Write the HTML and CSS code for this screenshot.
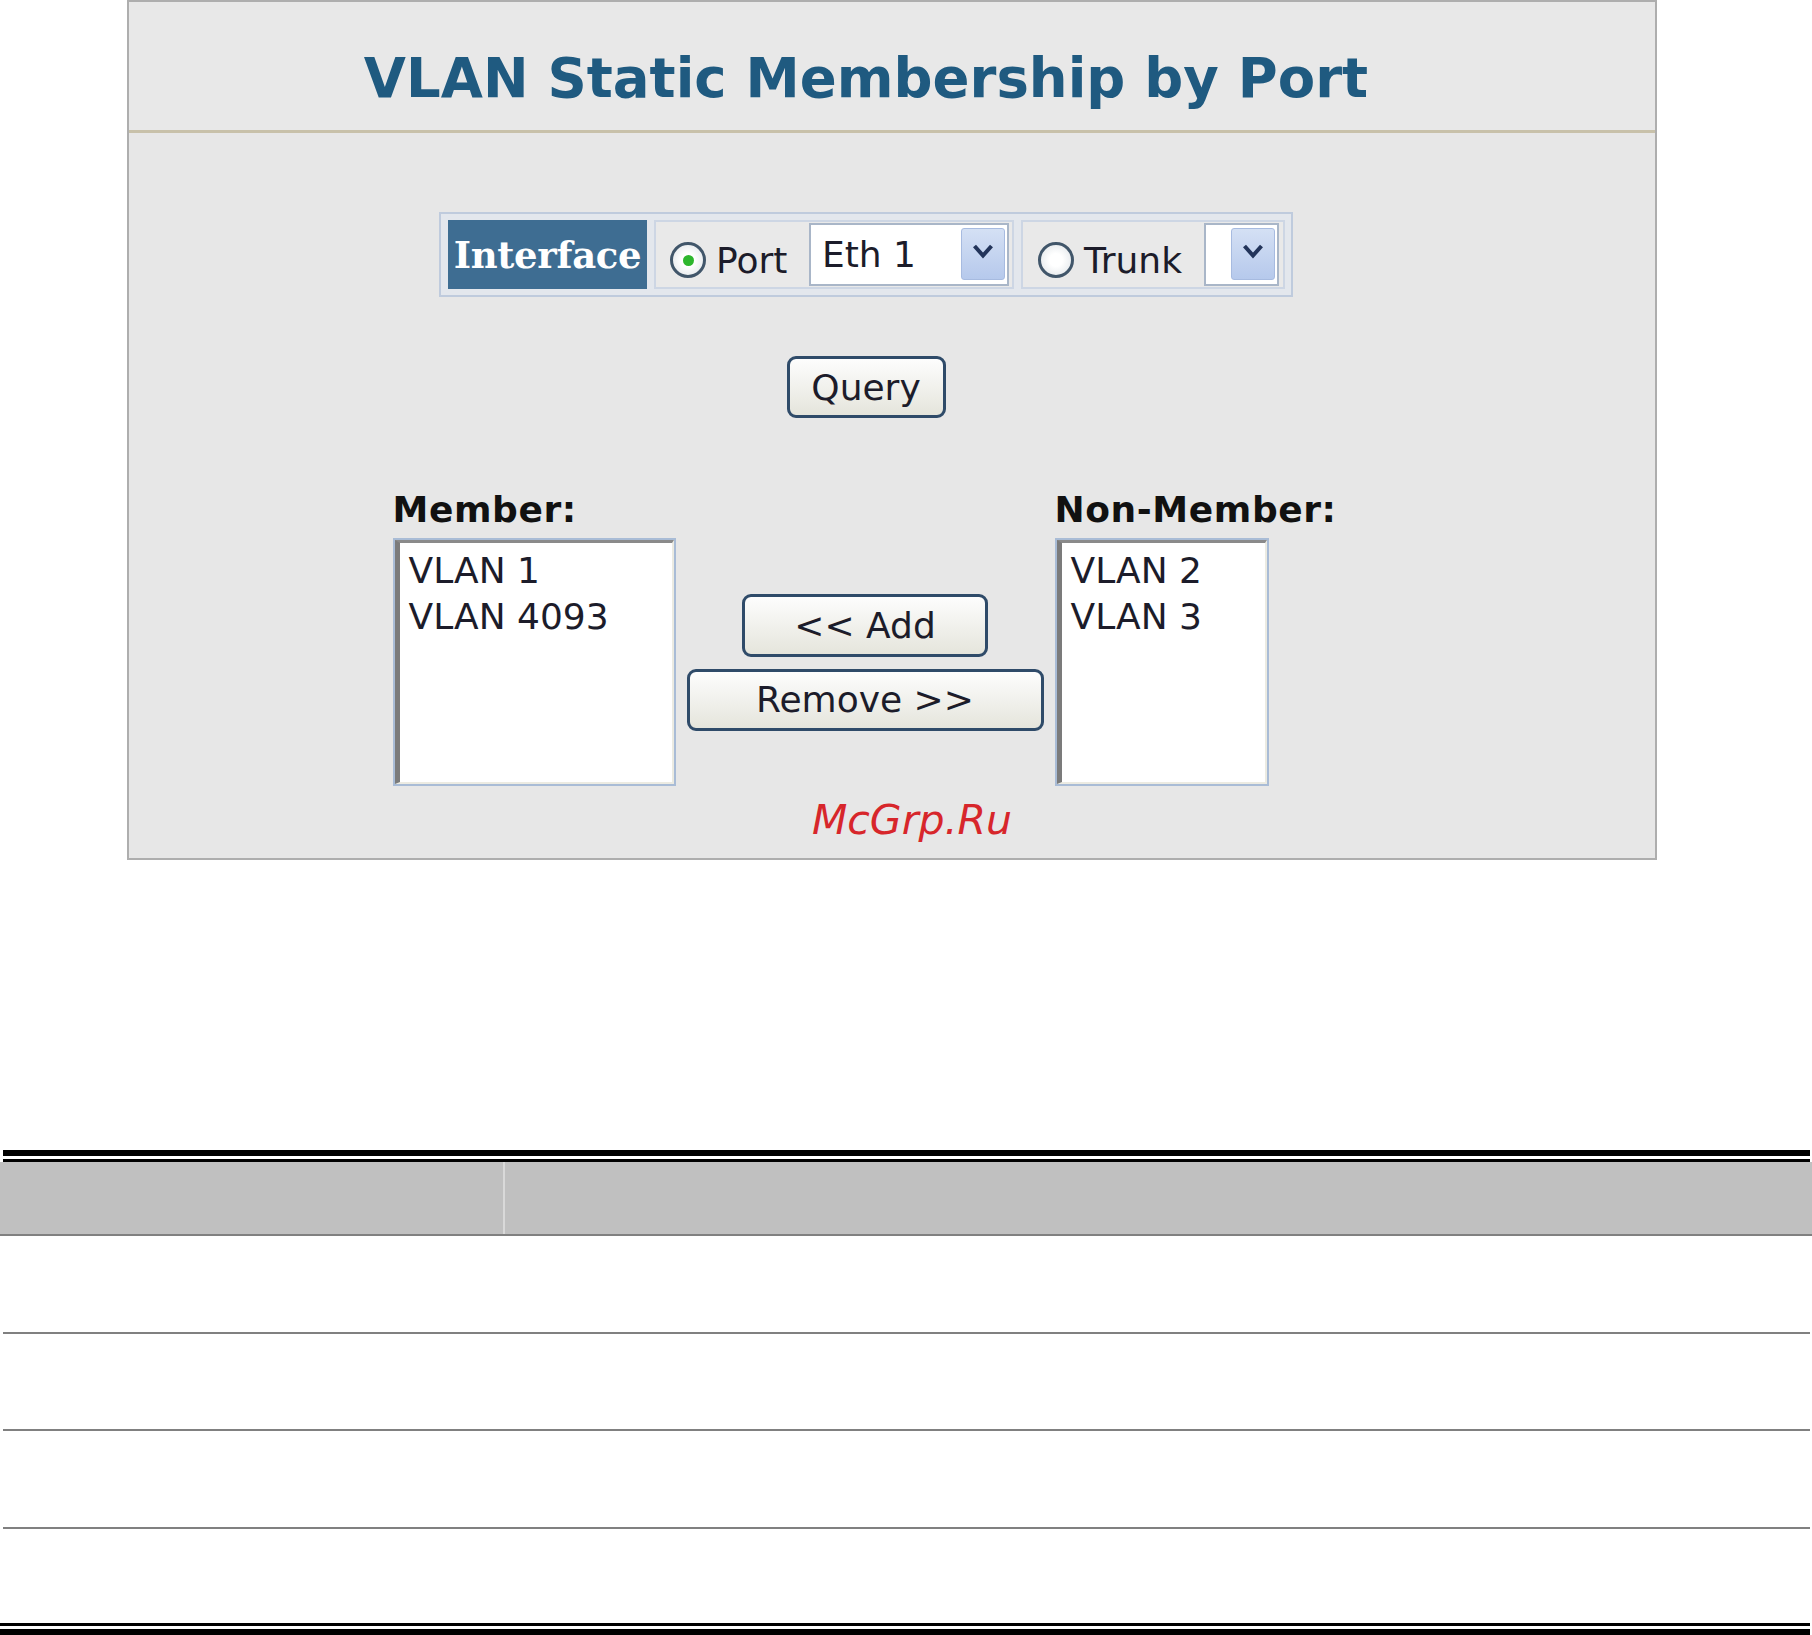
FILE: index.html
```html
<!DOCTYPE html>
<html lang="en">
<head>
    <meta charset="UTF-8">
    <meta name="viewport" content="width=device-width, initial-scale=1.0">
    <title>VLAN Static Membership by Port</title>
    <link rel="stylesheet" href="styles.css">
</head>
<body>
    <div class="panel">
        <div class="panel-head">
            <h1>VLAN Static Membership by Port</h1>
        </div>

        <div class="panel-body">
            <!-- interface selector -->
            <div class="iface">
                <div class="iface-label">Interface</div>
                <div class="iface-cell port-cell">
                    <span class="radio checked"></span>
                    <span class="opt">Port</span>
                    <div class="select port-select">
                        <span class="select-text">Eth 1</span>
                        <span class="drop">
                            <svg width="42" height="50" viewBox="0 0 42 50"><path d="M12.5 17 L21 26.5 L29.5 17" fill="none" stroke="#22345a" stroke-width="4"/></svg>
                        </span>
                    </div>
                </div>
                <div class="iface-cell trunk-cell">
                    <span class="radio"></span>
                    <span class="opt">Trunk</span>
                    <div class="select trunk-select">
                        <span class="select-text"></span>
                        <span class="drop">
                            <svg width="42" height="50" viewBox="0 0 42 50"><path d="M12.5 17 L21 26.5 L29.5 17" fill="none" stroke="#22345a" stroke-width="4"/></svg>
                        </span>
                    </div>
                </div>
            </div>

            <button class="btn query-btn">Query</button>

            <!-- member lists -->
            <div class="members">
                <div class="list-label">Member:</div>
                <div></div>
                <div class="list-label">Non-Member:</div>

                <div class="listbox member-list">
                    <div class="listbox-inner">
                        <div class="item">VLAN 1</div>
                        <div class="item">VLAN 4093</div>
                    </div>
                </div>
                <div class="move-buttons">
                    <button class="btn add-btn">&lt;&lt; Add</button>
                    <button class="btn remove-btn">Remove &gt;&gt;</button>
                </div>
                <div class="listbox nonmember-list">
                    <div class="listbox-inner">
                        <div class="item">VLAN 2</div>
                        <div class="item">VLAN 3</div>
                    </div>
                </div>
            </div>

            <div class="watermark">McGrp.Ru</div>
        </div>
    </div>

    <div class="param-table">
        <div class="rule-top"></div>
        <div class="thead">
            <div class="th th-first"></div>
            <div class="th"></div>
        </div>
        <div class="trow row-a"></div>
        <div class="trow row-b"></div>
        <div class="trow row-a"></div>
        <div class="trow row-last"></div>
        <div class="rule-bottom"></div>
    </div>
</body>
</html>
```

FILE: styles.css
```css
body {
    margin: 0;
    background: #fff;
    font-family: "DejaVu Sans", Verdana, sans-serif;
    color: #1c1c2a;
}

.panel {
    margin-left: 127px;
    width: 1530px;
    height: 860px;
    box-sizing: border-box;
    border: 2px solid #aeaeae;
    background: #e7e7e7;
}

.panel-head {
    padding: 44px 52px 20px 0;
    border-bottom: 3px solid #c8c1aa;
    background: #e8e8e8;
}
.panel-head h1 {
    margin: 0;
    text-align: center;
    font-size: 54.5px;
    line-height: 64px;
    font-weight: bold;
    color: #1f5a80;
}

.panel-body {
    padding: 79px 52px 0 0;
}

/* interface bar */
.iface {
    display: flex;
    width: fit-content;
    margin: 0 auto;
    gap: 7px;
    padding: 6px 6px 6px 7px;
    border: 2px solid #bfcbdd;
    background: #e3e7ed;
}
.iface-label {
    width: 199px;
    height: 69px;
    box-sizing: border-box;
    display: flex;
    align-items: center;
    justify-content: center;
    background: #3e6d92;
    color: #fff;
    font-family: "DejaVu Serif", "Liberation Serif", serif;
    font-weight: bold;
    font-size: 37px;
    letter-spacing: -0.3px;
}
.iface-cell {
    height: 69px;
    box-sizing: border-box;
    display: flex;
    align-items: center;
    gap: 10px;
    border: 2px solid #cdd6e4;
    background: #e9e9e9;
}
.port-cell {
    width: 360px;
    padding: 0 3px 0 14px;
}
.trunk-cell {
    width: 264px;
    padding: 0 4px 0 15px;
}
.opt {
    font-size: 36px;
    margin-top: 12px;
}
.radio {
    width: 36px;
    height: 36px;
    margin-top: 11px;
    box-sizing: border-box;
    border-radius: 50%;
    border: 3px solid #41566a;
    background: radial-gradient(circle, #ffffff 30%, #dde2e6);
    display: flex;
    align-items: center;
    justify-content: center;
    flex-shrink: 0;
}
.radio.checked::after {
    content: "";
    width: 11px;
    height: 11px;
    border-radius: 50%;
    background: #2db62d;
}

.select {
    height: 63px;
    box-sizing: border-box;
    margin-left: auto;
    display: flex;
    align-items: center;
    padding: 3px 2px 4px 11px;
    border: 2px solid #a9b6c8;
    background: #fff;
    font-size: 36px;
}
.port-select {
    width: 200px;
}
.trunk-select {
    width: 75px;
    padding-left: 2px;
}
.select-text {
    flex: 1;
}
.drop {
    width: 44px;
    height: 52px;
    box-sizing: border-box;
    border: 1px solid #a7bbe0;
    border-radius: 3px;
    background: linear-gradient(#d4e0f4, #b6c9ec);
    display: flex;
    align-items: center;
    justify-content: center;
}

/* buttons */
.btn {
    box-sizing: border-box;
    border: 3px solid #2f4b69;
    border-radius: 9px;
    background: linear-gradient(#fdfdfd, #e5e5dc);
    font-family: "DejaVu Sans", Verdana, sans-serif;
    font-size: 36px;
    color: #1c1c2a;
    padding: 0;
}
.query-btn {
    display: block;
    width: 159px;
    height: 62px;
    margin: 59px auto 0;
}

/* member / non-member */
.members {
    display: grid;
    grid-template-columns: 283px 357px 285px;
    column-gap: 11px;
    width: fit-content;
    margin: 70px auto 0;
}
.list-label {
    font-weight: bold;
    font-size: 36px;
    line-height: 44px;
    letter-spacing: 0.6px;
    color: #111;
    white-space: nowrap;
}
.listbox {
    height: 248px;
    margin-top: 6px;
    box-sizing: border-box;
    border: 2px solid #a9bcd6;
}
.nonmember-list {
    width: 214px;
}
.listbox-inner {
    height: 100%;
    box-sizing: border-box;
    padding: 5px 0 0 9px;
    border-left: 5px solid #7b7b7b;
    border-top: 3px solid #8a8a8a;
    border-right: 2px solid #ecebe2;
    border-bottom: 2px solid #ecebe2;
    background: #fff;
}
.item {
    font-size: 36px;
    line-height: 46px;
}
.move-buttons {
    margin-top: 6px;
    display: flex;
    flex-direction: column;
    align-items: center;
    justify-content: center;
    gap: 12px;
}
.add-btn {
    width: 246px;
    height: 63px;
}
.remove-btn {
    width: 357px;
    height: 62px;
}

.watermark {
    margin-top: 10px;
    padding-left: 92px;
    text-align: center;
    font-size: 41px;
    line-height: 48px;
    font-style: italic;
    color: #d7262b;
}

/* parameter table */
.param-table {
    margin: 290px 2px 0 3px;
}
.rule-top {
    height: 3px;
    border-top: 6px solid #000;
    border-bottom: 3px solid #000;
}
.thead {
    display: grid;
    grid-template-columns: 505px 1fr;
    height: 72px;
    margin: 0 -2px 0 -3px;
    background: #c0c0c0;
    border-bottom: 2px solid #808080;
}
.th-first {
    border-right: 2px solid #d9d9d9;
}
.trow {
    border-bottom: 2px solid #808080;
}
.row-a {
    height: 96px;
}
.row-b {
    height: 95px;
}
.row-last {
    height: 94px;
    border-bottom: none;
}
.rule-bottom {
    margin-left: -3px;
    height: 3px;
    border-top: 3px solid #000;
    border-bottom: 6px solid #000;
}
```
